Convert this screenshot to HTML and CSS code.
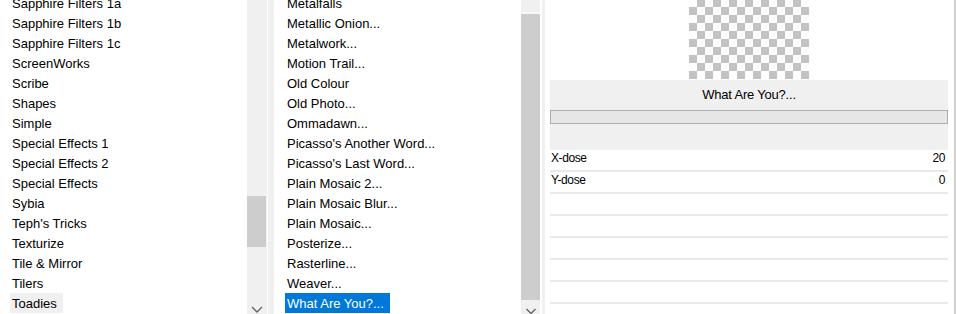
FILE: index.html
```html
<!DOCTYPE html>
<html lang="en">
<head>
    <meta charset="UTF-8">
    <meta name="viewport" content="width=device-width, initial-scale=1.0">
    <title>Filters</title>
    <link rel="stylesheet" href="styles.css">
</head>
<body>
    <div class="dialog">
        <div class="pane cats">
            <ul class="list">
                <li><span class="item">Sapphire Filters 1a</span></li>
                <li><span class="item">Sapphire Filters 1b</span></li>
                <li><span class="item">Sapphire Filters 1c</span></li>
                <li><span class="item">ScreenWorks</span></li>
                <li><span class="item">Scribe</span></li>
                <li><span class="item">Shapes</span></li>
                <li><span class="item">Simple</span></li>
                <li><span class="item">Special Effects 1</span></li>
                <li><span class="item">Special Effects 2</span></li>
                <li><span class="item">Special Effects</span></li>
                <li><span class="item">Sybia</span></li>
                <li><span class="item">Teph's Tricks</span></li>
                <li><span class="item">Texturize</span></li>
                <li><span class="item">Tile &amp; Mirror</span></li>
                <li><span class="item">Tilers</span></li>
                <li><span class="item current">Toadies</span></li>
            </ul>
            <div class="scrollbar">
                <div class="thumb thumb-cats"></div>
                <svg class="arrow" width="20" height="12" viewBox="0 0 20 12"><path d="M5 5 L10 10 L15 5" fill="none" stroke="#606060" stroke-width="1.3"/></svg>
            </div>
        </div>
        <div class="split"></div>
        <div class="pane filters">
            <ul class="list">
                <li><span class="item">Metalfalls</span></li>
                <li><span class="item">Metallic Onion...</span></li>
                <li><span class="item">Metalwork...</span></li>
                <li><span class="item">Motion Trail...</span></li>
                <li><span class="item">Old Colour</span></li>
                <li><span class="item">Old Photo...</span></li>
                <li><span class="item">Ommadawn...</span></li>
                <li><span class="item">Picasso's Another Word...</span></li>
                <li><span class="item">Picasso's Last Word...</span></li>
                <li><span class="item">Plain Mosaic 2...</span></li>
                <li><span class="item">Plain Mosaic Blur...</span></li>
                <li><span class="item">Plain Mosaic...</span></li>
                <li><span class="item">Posterize...</span></li>
                <li><span class="item">Rasterline...</span></li>
                <li><span class="item">Weaver...</span></li>
                <li><span class="item selected">What Are You?...</span></li>
            </ul>
            <div class="scrollbar">
                <div class="btn-up"></div>
                <div class="thumb thumb-filters"></div>
                <svg class="arrow" width="20" height="12" viewBox="0 0 20 12"><path d="M5.5 7 L10 11.5 L14.5 7" fill="none" stroke="#606060" stroke-width="1.3"/></svg>
            </div>
        </div>
        <div class="split wide"></div>
        <div class="panel">
            <div class="preview"></div>
            <div class="filter-box">
                <div class="filter-name">What Are You?...</div>
                <div class="meter"></div>
            </div>
            <div class="param"><span>X-dose</span><span>20</span></div>
            <div class="param"><span>Y-dose</span><span>0</span></div>
            <div class="param"></div>
            <div class="param"></div>
            <div class="param"></div>
            <div class="param"></div>
            <div class="param"></div>
        </div>
    </div>
</body>
</html>
```

FILE: styles.css
```css
body {
    margin: 0px;
    font-family: "Liberation Sans", Arial, sans-serif;
    font-size: 13px;
    color: #000;
    background-color: #fff;
    overflow: hidden;
}
.dialog {
    display: flex;
    height: 314px;
    overflow: hidden;
}
.pane {
    display: flex;
}
.list {
    list-style: none;
    margin: -7px 0px 0px;
    padding: 0px;
    width: 247px;
}
.list li {
    height: 20px;
    line-height: 21px;
    padding-left: 10px;
    white-space: nowrap;
}
.filters .list li {
    padding-left: 11px;
}
.item {
    display: inline-block;
    height: 20px;
    padding: 0px 6px 0px 2px;
}
.item.current {
    background-color: #f0f0f0;
}
.item.selected {
    background-color: #0078d7;
    color: #fff;
}
.scrollbar {
    display: flex;
    flex-direction: column;
    width: 20px;
    background-color: #f0f0f0;
}
.filters .scrollbar {
    width: 19px;
}
.thumb {
    background-color: #cdcdcd;
    margin-right: 1px;
}
.thumb-cats {
    margin-top: 196px;
    height: 51px;
}
.btn-up {
    height: 12px;
    border-bottom: 2px solid #f7f7f7;
}
.thumb-filters {
    height: 286px;
    margin-right: 0px;
}
.arrow {
    margin-top: auto;
}
.split {
    width: 6px;
    border-left: 1px solid #fff;
    background-color: #f0f0f0;
}
.split.wide {
    width: 3px;
    border-left: 2px solid #fff;
}
.panel {
    display: flex;
    flex-direction: column;
    width: 398px;
    padding: 0px 6px 0px 5px;
    border-right: 2px solid #d0d0d0;
}
.preview {
    align-self: center;
    width: 120px;
    height: 79px;
    flex-shrink: 0;
    background-image: conic-gradient(#c3c3c3 25%, #fff 0 50%, #c3c3c3 0 75%, #fff 0);
    background-size: 16px 16px;
    background-position: left bottom;
}
.filter-box {
    margin-top: 1px;
    height: 70px;
    flex-shrink: 0;
    background-color: #f0f0f0;
}
.filter-name {
    height: 30px;
    line-height: 30px;
    text-align: center;
    letter-spacing: -0.2px;
}
.meter {
    height: 12px;
    border: 1px solid #adadad;
    background-color: #e6e6e6;
}
.param {
    display: flex;
    justify-content: space-between;
    flex-shrink: 0;
    height: 20px;
    line-height: 17px;
    padding: 0px 3px 0px 1px;
    font-size: 12px;
    letter-spacing: -0.4px;
    border-bottom: 2px solid #e9e9e9;
}
```
